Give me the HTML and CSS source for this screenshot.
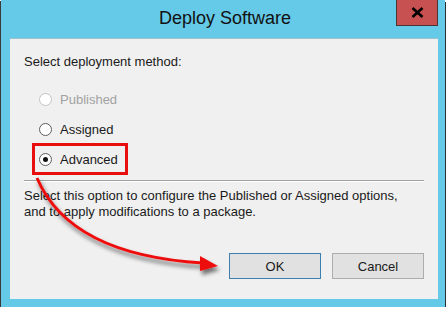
FILE: index.html
```html
<!DOCTYPE html>
<html lang="en">
<head>
    <meta charset="UTF-8">
    <title>Deploy Software</title>
    <link rel="stylesheet" href="styles.css">
</head>
<body>
<div class="window">
    <div class="titlebar">
        <div class="title">Deploy Software</div>
        <div class="close">
            <svg width="13" height="11" viewBox="0 0 13 11">
                <path d="M1.5 1 L11.5 10 M11.5 1 L1.5 10" stroke="#000" stroke-width="2.6" fill="none"/>
            </svg>
        </div>
    </div>
    <div class="client">
        <div class="caption">Select deployment method:</div>
        <div class="options">
            <div class="option disabled"><span class="radio"></span>Published</div>
            <div class="option"><span class="radio"></span>Assigned</div>
            <div class="option selected"><span class="radio checked"></span>Advanced</div>
        </div>
        <div class="separator"></div>
        <div class="desc">Select this option to configure the Published or Assigned options,<br>and to apply modifications to a package.</div>
        <div class="buttons">
            <div class="btn default">OK</div>
            <div class="btn">Cancel</div>
        </div>
    </div>

    <!-- callout arrow drawn over the dialog -->
    <svg class="arrow" width="446" height="309" viewBox="0 0 446 309">
        <defs>
            <filter id="shadow" x="-20%" y="-20%" width="140%" height="140%">
                <feDropShadow dx="2" dy="4" stdDeviation="2" flood-color="#000" flood-opacity="0.55"/>
            </filter>
        </defs>
        <g filter="url(#shadow)">
            <path d="M37 178 Q70 255 203 263" stroke="#ee1111" stroke-width="3" fill="none"/>
            <path d="M200 256 L218 266 L200 271 Z" fill="#ee1111"/>
        </g>
    </svg>
</div>
</body>
</html>
```

FILE: styles.css
```css
* {
    box-sizing: border-box;
}

body {
    margin: 0;
    background: #ffffff;
    font-family: "Liberation Sans", Arial, sans-serif;
    font-size: 13px;
    color: #1a1a1a;
}

.window {
    position: relative;
    width: 444px;
    height: 307px;
    margin-left: 1px;
    background: #65c9e8;
    padding: 0 7px 8px 9px;
    display: flex;
    flex-direction: column;
    box-shadow: -1px 1px 0 #3a3a3a, 1px 2px 0 #2e2e2e;
}

.titlebar {
    height: 38px;
    display: flex;
    align-items: center;
    justify-content: center;
    padding-bottom: 2px;
}

.title {
    font-size: 18px;
    color: #111;
    margin-left: 2px;
}

.close {
    position: absolute;
    top: 0;
    right: 7px;
    width: 42px;
    height: 26px;
    background: #c75050;
    border: 1px solid #4a3434;
    border-top: none;
    display: flex;
    align-items: center;
    justify-content: center;
    padding-bottom: 1px;
}

.client {
    flex: 1;
    background: #f0f0f0;
    border-top: 1px solid #9fc1cf;
    padding: 15px 14px 0 14px;
    display: flex;
    flex-direction: column;
}

.caption {
    line-height: 16px;
}

.options {
    margin-top: 16px;
    margin-left: 11px;
    display: flex;
    flex-direction: column;
    gap: 4px;
}

.option {
    width: 90px;
    height: 26px;
    padding-left: 4px;
    display: flex;
    align-items: center;
    gap: 8px;
}

.option.disabled {
    color: #a2a2a2;
}

.option.selected {
    outline: 3px solid #e80f0f;
}

.radio {
    width: 13px;
    height: 13px;
    border-radius: 50%;
    border: 1px solid #5e5e5e;
    background: #ffffff;
    display: flex;
    align-items: center;
    justify-content: center;
}

.option.disabled .radio {
    border-color: #c4c4c4;
}

.radio.checked::after {
    content: "";
    width: 5px;
    height: 5px;
    border-radius: 50%;
    background: #111;
}

.separator {
    margin-top: 8px;
    height: 2px;
    border-top: 1px solid #a0a0a0;
    border-bottom: 1px solid #ffffff;
}

.desc {
    margin-top: 6px;
    line-height: 16px;
}

.buttons {
    margin-top: 33px;
    display: flex;
    justify-content: flex-end;
    gap: 11px;
}

.btn {
    width: 92px;
    height: 26px;
    border: 1px solid #adadad;
    background: #e1e1e1;
    display: flex;
    align-items: center;
    justify-content: center;
}

.btn.default {
    border-color: #3c7fb1;
}

.arrow {
    position: absolute;
    top: 0;
    left: -1px;
    pointer-events: none;
}
```
